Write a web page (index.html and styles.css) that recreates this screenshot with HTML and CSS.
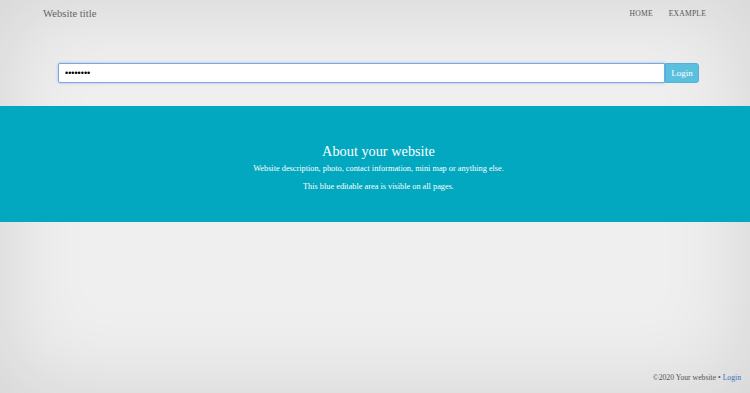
FILE: index.html
```html
<!DOCTYPE html>
<html lang="en">
<head>
    <meta charset="UTF-8">
    <meta name="viewport" content="width=device-width, initial-scale=1.0">
    <title>Website title</title>
    <link rel="stylesheet" href="styles.css">
</head>
<body>
    <div class="page">
        <header class="header">
            <div class="site-title">Website title</div>
            <nav class="nav">
                <a href="#">Home</a>
                <a href="#">Example</a>
            </nav>
        </header>

        <form class="login">
            <input type="password" class="login-input" value="password">
            <button type="button" class="login-button">Login</button>
        </form>

        <section class="about">
            <h2>About your website</h2>
            <p>Website description, photo, contact information, mini map or anything else.</p>
            <p>This blue editable area is visible on all pages.</p>
        </section>

        <footer class="footer">
            &copy;2020 Your website &bull; <a href="#">Login</a>
        </footer>
    </div>
</body>
</html>
```

FILE: styles.css
```css
html, body {
    height: 100%;
}
body {
    margin: 0;
    font-family: "Liberation Serif", "Times New Roman", serif;
    color: #555;
    background-color: #efefef;
}
.page {
    min-height: 100%;
    display: flex;
    flex-direction: column;
    box-shadow: inset 0 0 90px rgba(0, 0, 0, 0.12);
}
.header {
    display: flex;
    justify-content: space-between;
    align-items: center;
    padding: 5px 44px 0 43px;
    height: 16px;
}
.site-title {
    font-size: 10.7px;
    color: #666;
}
.nav {
    display: flex;
    gap: 16px;
}
.nav a {
    font-size: 7.6px;
    text-transform: uppercase;
    color: #555;
    text-decoration: none;
    letter-spacing: 0.2px;
}
.login {
    display: flex;
    margin: 42px 51px 0 58px;
    height: 20px;
}
.login-input {
    flex: 1;
    box-sizing: border-box;
    height: 20px;
    margin: 0;
    padding: 0 6px;
    border: 1px solid #7aa6e6;
    border-radius: 2px 0 0 2px;
    box-shadow: 0 0 3px rgba(102, 160, 233, 0.6);
    font-size: 9px;
    background: #fff;
    outline: none;
}
.login-button {
    width: 34px;
    height: 20px;
    margin: 0;
    padding: 0;
    border: 1px solid #4fb3d8;
    border-radius: 0 3px 3px 0;
    background-color: #5bc0de;
    color: #fff;
    font-family: inherit;
    font-size: 9px;
}
.about {
    margin-top: 23px;
    height: 116px;
    box-sizing: border-box;
    padding: 37px 0 0 7px;
    background-color: #01a8bf;
    color: #fff;
    text-align: center;
}
.about h2 {
    margin: 0 0 4px;
    font-size: 14.3px;
    font-weight: normal;
    line-height: 17px;
}
.about p {
    margin: 0 0 8px;
    font-size: 8.3px;
    line-height: 10px;
}
.footer {
    margin-top: auto;
    padding: 0 9px 11px 0;
    text-align: right;
    font-size: 7.7px;
    color: #555;
}
.footer a {
    color: #3a6fb0;
    text-decoration: none;
}
```
